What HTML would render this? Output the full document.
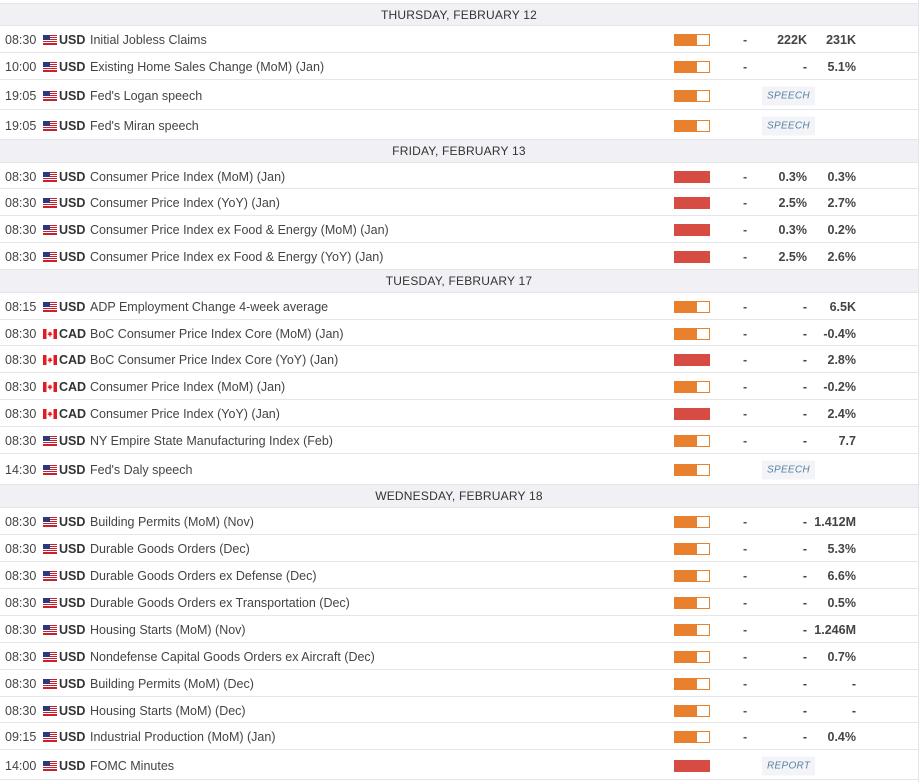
<!DOCTYPE html>
<html><head><meta charset="utf-8"><style>
body{margin:0;width:921px;height:782px;background:#fff;font-family:"Liberation Sans",sans-serif;color:#333;position:relative;overflow:hidden}
.r{position:absolute;left:0;width:918px;border-bottom:1px solid #e6e6ea;box-sizing:border-box}
.h{background:#f0f0f5;text-align:center;font-size:12px;color:#333;letter-spacing:0.2px}
.r span{position:absolute;top:50%;transform:translateY(calc(-50% + 1px));font-size:12.5px;white-space:nowrap}
.t{left:5px;color:#444}
.c{left:59px;font-weight:bold;color:#333}
.e{left:90px;color:#444}
.b{left:674px;width:36px;height:12px;box-sizing:border-box}
.o{background:linear-gradient(90deg,#e8802e 22px,#fff 22px);border:1px solid #e8802e}
.x{background:#d64c42}
.d{left:743px;font-weight:bold;color:#555}
.a{right:111px;font-weight:bold;color:#444}
.p{right:62px;font-weight:bold;color:#444}
.s{left:762px;background:#f2f4f7;color:#5a7fa3;font-style:italic;font-size:10px!important;padding:4px 5px;letter-spacing:0.3px}
#line{position:absolute;left:918px;top:0;width:1px;height:782px;background:#e3e3e8}
</style></head><body>
<div id="line"></div>
<svg width="0" height="0" style="position:absolute"><defs>
<g id="us"><rect width="14" height="10" fill="#fff"/><g fill="#c8202c"><rect y="0" width="14" height="1"/><rect y="2" width="14" height="1"/><rect y="4" width="14" height="1"/><rect y="6" width="14" height="1"/><rect y="8" width="14" height="1"/><rect y="9" width="14" height="1"/></g><rect width="7" height="5" fill="#2a3a7c"/></g>
<g id="ca"><rect width="14" height="10" fill="#fff"/><rect width="3.5" height="10" fill="#e21b23"/><rect x="10.5" width="3.5" height="10" fill="#e21b23"/><path d="M7 2.2 L7.8 3.6 L8.8 3.2 L8.4 5.2 L9.4 4.6 L9.2 5.8 L7.4 6.6 L7.4 8 L6.6 8 L6.6 6.6 L4.8 5.8 L4.6 4.6 L5.6 5.2 L5.2 3.2 L6.2 3.6Z" fill="#e21b23"/></g>
</defs></svg>

<div class="r h" style="top:3px;height:23px;line-height:23px;border-top:1px solid #e6e6ea">THURSDAY, FEBRUARY 12</div>
<div class="r" style="top:26px;height:27px"><span class="t">08:30</span><svg style="position:absolute;top:9px;left:43px" width="14" height="10"><use href="#us"/></svg><span class="c">USD</span><span class="e">Initial Jobless Claims</span><span class="b o"></span><span class="d">-</span><span class="a">222K</span><span class="p">231K</span></div>
<div class="r" style="top:53px;height:27px"><span class="t">10:00</span><svg style="position:absolute;top:9px;left:43px" width="14" height="10"><use href="#us"/></svg><span class="c">USD</span><span class="e">Existing Home Sales Change (MoM) (Jan)</span><span class="b o"></span><span class="d">-</span><span class="a">-</span><span class="p">5.1%</span></div>
<div class="r" style="top:80px;height:30px"><span class="t">19:05</span><svg style="position:absolute;top:11px;left:43px" width="14" height="10"><use href="#us"/></svg><span class="c">USD</span><span class="e">Fed's Logan speech</span><span class="b o"></span><span class="s">SPEECH</span></div>
<div class="r" style="top:110px;height:30px"><span class="t">19:05</span><svg style="position:absolute;top:11px;left:43px" width="14" height="10"><use href="#us"/></svg><span class="c">USD</span><span class="e">Fed's Miran speech</span><span class="b o"></span><span class="s">SPEECH</span></div>

<div class="r h" style="top:140px;height:23px;line-height:23px">FRIDAY, FEBRUARY 13</div>
<div class="r" style="top:163px;height:26px"><span class="t">08:30</span><svg style="position:absolute;top:9px;left:43px" width="14" height="10"><use href="#us"/></svg><span class="c">USD</span><span class="e">Consumer Price Index (MoM) (Jan)</span><span class="b x"></span><span class="d">-</span><span class="a">0.3%</span><span class="p">0.3%</span></div>
<div class="r" style="top:189px;height:27px"><span class="t">08:30</span><svg style="position:absolute;top:9px;left:43px" width="14" height="10"><use href="#us"/></svg><span class="c">USD</span><span class="e">Consumer Price Index (YoY) (Jan)</span><span class="b x"></span><span class="d">-</span><span class="a">2.5%</span><span class="p">2.7%</span></div>
<div class="r" style="top:216px;height:27px"><span class="t">08:30</span><svg style="position:absolute;top:9px;left:43px" width="14" height="10"><use href="#us"/></svg><span class="c">USD</span><span class="e">Consumer Price Index ex Food &amp; Energy (MoM) (Jan)</span><span class="b x"></span><span class="d">-</span><span class="a">0.3%</span><span class="p">0.2%</span></div>
<div class="r" style="top:243px;height:27px"><span class="t">08:30</span><svg style="position:absolute;top:9px;left:43px" width="14" height="10"><use href="#us"/></svg><span class="c">USD</span><span class="e">Consumer Price Index ex Food &amp; Energy (YoY) (Jan)</span><span class="b x"></span><span class="d">-</span><span class="a">2.5%</span><span class="p">2.6%</span></div>

<div class="r h" style="top:270px;height:23px;line-height:23px">TUESDAY, FEBRUARY 17</div>
<div class="r" style="top:293px;height:27px"><span class="t">08:15</span><svg style="position:absolute;top:9px;left:43px" width="14" height="10"><use href="#us"/></svg><span class="c">USD</span><span class="e">ADP Employment Change 4-week average</span><span class="b o"></span><span class="d">-</span><span class="a">-</span><span class="p">6.5K</span></div>
<div class="r" style="top:320px;height:26px"><span class="t">08:30</span><svg style="position:absolute;top:9px;left:43px" width="14" height="10"><use href="#ca"/></svg><span class="c">CAD</span><span class="e">BoC Consumer Price Index Core (MoM) (Jan)</span><span class="b o"></span><span class="d">-</span><span class="a">-</span><span class="p">-0.4%</span></div>
<div class="r" style="top:346px;height:27px"><span class="t">08:30</span><svg style="position:absolute;top:9px;left:43px" width="14" height="10"><use href="#ca"/></svg><span class="c">CAD</span><span class="e">BoC Consumer Price Index Core (YoY) (Jan)</span><span class="b x"></span><span class="d">-</span><span class="a">-</span><span class="p">2.8%</span></div>
<div class="r" style="top:373px;height:27px"><span class="t">08:30</span><svg style="position:absolute;top:9px;left:43px" width="14" height="10"><use href="#ca"/></svg><span class="c">CAD</span><span class="e">Consumer Price Index (MoM) (Jan)</span><span class="b o"></span><span class="d">-</span><span class="a">-</span><span class="p">-0.2%</span></div>
<div class="r" style="top:400px;height:27px"><span class="t">08:30</span><svg style="position:absolute;top:9px;left:43px" width="14" height="10"><use href="#ca"/></svg><span class="c">CAD</span><span class="e">Consumer Price Index (YoY) (Jan)</span><span class="b x"></span><span class="d">-</span><span class="a">-</span><span class="p">2.4%</span></div>
<div class="r" style="top:427px;height:27px"><span class="t">08:30</span><svg style="position:absolute;top:9px;left:43px" width="14" height="10"><use href="#us"/></svg><span class="c">USD</span><span class="e">NY Empire State Manufacturing Index (Feb)</span><span class="b o"></span><span class="d">-</span><span class="a">-</span><span class="p">7.7</span></div>
<div class="r" style="top:454px;height:31px"><span class="t">14:30</span><svg style="position:absolute;top:11px;left:43px" width="14" height="10"><use href="#us"/></svg><span class="c">USD</span><span class="e">Fed's Daly speech</span><span class="b o"></span><span class="s">SPEECH</span></div>

<div class="r h" style="top:485px;height:23px;line-height:23px">WEDNESDAY, FEBRUARY 18</div>
<div class="r" style="top:508px;height:27px"><span class="t">08:30</span><svg style="position:absolute;top:9px;left:43px" width="14" height="10"><use href="#us"/></svg><span class="c">USD</span><span class="e">Building Permits (MoM) (Nov)</span><span class="b o"></span><span class="d">-</span><span class="a">-</span><span class="p">1.412M</span></div>
<div class="r" style="top:535px;height:27px"><span class="t">08:30</span><svg style="position:absolute;top:9px;left:43px" width="14" height="10"><use href="#us"/></svg><span class="c">USD</span><span class="e">Durable Goods Orders (Dec)</span><span class="b o"></span><span class="d">-</span><span class="a">-</span><span class="p">5.3%</span></div>
<div class="r" style="top:562px;height:27px"><span class="t">08:30</span><svg style="position:absolute;top:9px;left:43px" width="14" height="10"><use href="#us"/></svg><span class="c">USD</span><span class="e">Durable Goods Orders ex Defense (Dec)</span><span class="b o"></span><span class="d">-</span><span class="a">-</span><span class="p">6.6%</span></div>
<div class="r" style="top:589px;height:27px"><span class="t">08:30</span><svg style="position:absolute;top:9px;left:43px" width="14" height="10"><use href="#us"/></svg><span class="c">USD</span><span class="e">Durable Goods Orders ex Transportation (Dec)</span><span class="b o"></span><span class="d">-</span><span class="a">-</span><span class="p">0.5%</span></div>
<div class="r" style="top:616px;height:27px"><span class="t">08:30</span><svg style="position:absolute;top:9px;left:43px" width="14" height="10"><use href="#us"/></svg><span class="c">USD</span><span class="e">Housing Starts (MoM) (Nov)</span><span class="b o"></span><span class="d">-</span><span class="a">-</span><span class="p">1.246M</span></div>
<div class="r" style="top:643px;height:27px"><span class="t">08:30</span><svg style="position:absolute;top:9px;left:43px" width="14" height="10"><use href="#us"/></svg><span class="c">USD</span><span class="e">Nondefense Capital Goods Orders ex Aircraft (Dec)</span><span class="b o"></span><span class="d">-</span><span class="a">-</span><span class="p">0.7%</span></div>
<div class="r" style="top:670px;height:27px"><span class="t">08:30</span><svg style="position:absolute;top:9px;left:43px" width="14" height="10"><use href="#us"/></svg><span class="c">USD</span><span class="e">Building Permits (MoM) (Dec)</span><span class="b o"></span><span class="d">-</span><span class="a">-</span><span class="p">-</span></div>
<div class="r" style="top:697px;height:26px"><span class="t">08:30</span><svg style="position:absolute;top:9px;left:43px" width="14" height="10"><use href="#us"/></svg><span class="c">USD</span><span class="e">Housing Starts (MoM) (Dec)</span><span class="b o"></span><span class="d">-</span><span class="a">-</span><span class="p">-</span></div>
<div class="r" style="top:723px;height:27px"><span class="t">09:15</span><svg style="position:absolute;top:9px;left:43px" width="14" height="10"><use href="#us"/></svg><span class="c">USD</span><span class="e">Industrial Production (MoM) (Jan)</span><span class="b o"></span><span class="d">-</span><span class="a">-</span><span class="p">0.4%</span></div>
<div class="r" style="top:750px;height:30px"><span class="t">14:00</span><svg style="position:absolute;top:11px;left:43px" width="14" height="10"><use href="#us"/></svg><span class="c">USD</span><span class="e">FOMC Minutes</span><span class="b x"></span><span class="s">REPORT</span></div>
</body></html>
